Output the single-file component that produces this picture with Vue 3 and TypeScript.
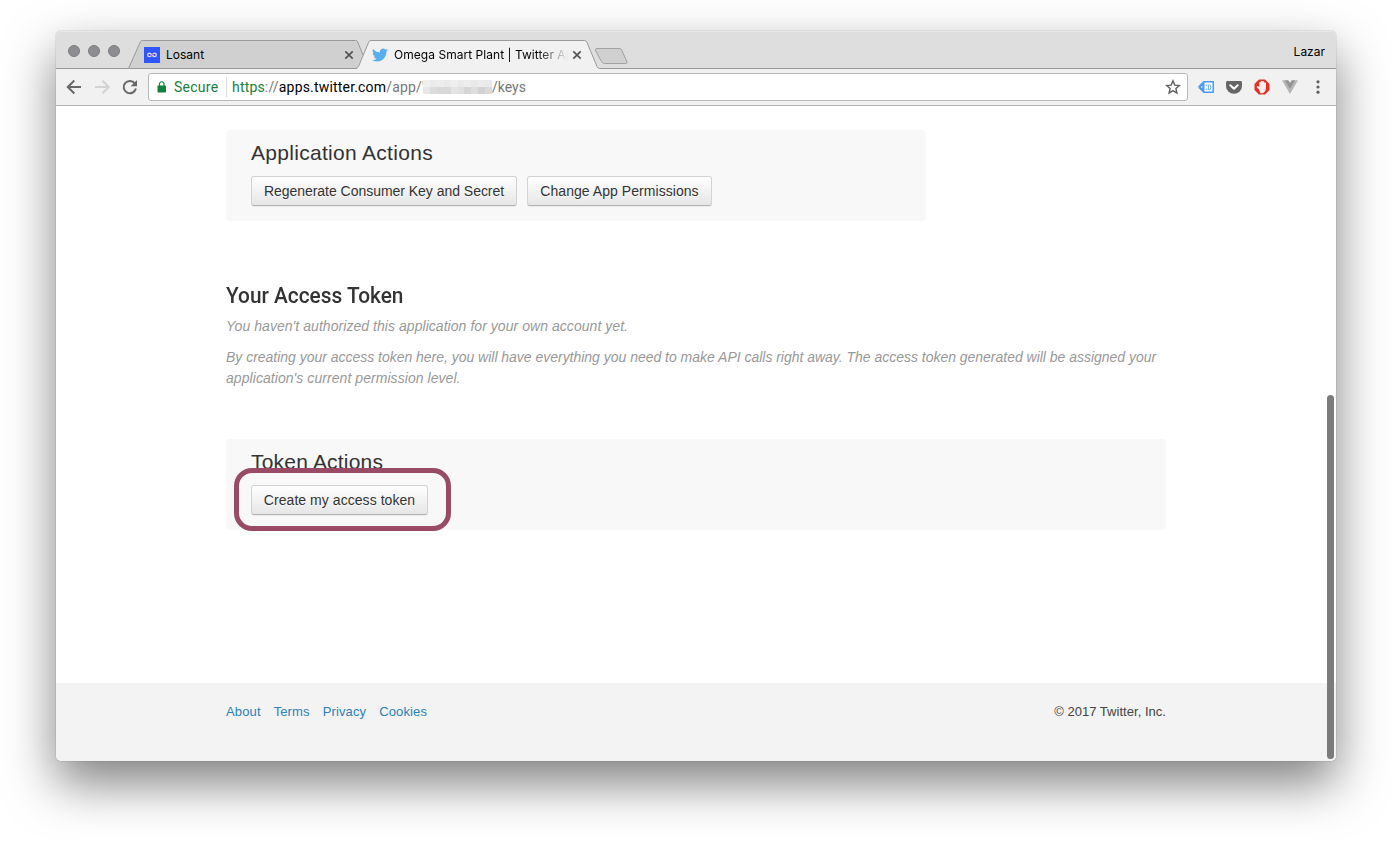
<script setup lang="ts">
interface FooterLink {
  label: string
  cls: string
}

const footerLinks: FooterLink[] = [
  { label: 'About', cls: 'about' },
  { label: 'Terms', cls: 'terms' },
  { label: 'Privacy', cls: 'privacy' },
  { label: 'Cookies', cls: 'cookies' },
]

// Grey levels of the pixelated application id in the address bar
const mosaic: string[][] = [
  ['#f0f0f0', '#ebebeb', '#ededed', '#eaeaea', '#eeeeee', '#eaeaea', '#ededed', '#e9e9e9', '#ececec', '#eaeaea'],
  ['#e8e8e8', '#dcdcdc', '#d9d9d9', '#d9d9d9', '#e4e4e4', '#e0e0e0', '#d6d6d6', '#dedede', '#d2d2d2', '#dadada'],
]
</script>

<template>
  <div class="desktop">
    <div class="window">
      <header class="tabstrip">
        <svg class="tab-shapes" width="1280" height="38" viewBox="0 0 1280 38">
          <path d="M72.5 37.5L84.5 10.5Q85 9.5 86.5 9.5H299.5Q301 9.5 301.5 10.5L307 24L301 37.5Z" fill="#d0d0d0" />
          <path d="M0 37.5H72.5L84.5 10.5Q85 9.5 86.5 9.5H299.5Q301 9.5 301.5 10.5L307 24M72.5 37.5H301" fill="none" stroke="#999" />
          <path d="M300 38C302 37 302 36 303 34.5L312.5 11.5Q313.2 9.5 315 9.5H528.5Q530.2 9.5 531 11.5L541.5 36Q542 37.5 543.5 37.5H1280V39H300Z" fill="#f1f1f1" />
          <path d="M300 37.5Q301.7 37.3 302.5 35.5L312.5 11.5Q313.2 9.5 315 9.5H528.5Q530.2 9.5 531 11.5L541 35.5Q542 37.5 543.5 37.5H1280" fill="none" stroke="#999" />
          <path d="M541 17.5H563Q565 17.5 565.7 19L571 31Q571.5 32.5 569.5 32.5H548.5Q546.5 32.5 545.5 30.5L539.5 19.5Q539 17.5 541 17.5Z" fill="#d0d0d0" stroke="#a0a0a0" />
        </svg>
        <div class="lights"><i></i><i></i><i></i></div>
        <div class="tab losant">
          <svg width="16" height="16" viewBox="0 0 16 16">
            <rect width="16" height="16" fill="#2f55ff" />
            <path d="M8 8C6.8 6.5 6.2 6.1 5.500 6.100A1.800 1.800 0 0 0 5.500 9.700C6.600 9.700 7.200 8.900 8 8C8.800 7 9.400 6.100 10.500 6.100A1.800 1.800 0 0 1 10.500 9.700C9.700 9.700 8.900 9 8 8" fill="none" stroke="#d9deff" stroke-width="1.300" />
            <path d="M6.700 9.300L9.300 6.500" stroke="#ee5b99" stroke-width="1.100" />
          </svg>
          <span class="tab-title">Losant</span>
          <svg class="close" width="10" height="10" viewBox="0 0 10 10"><path d="M1.300 1.300L8.700 8.700M8.700 1.300L1.300 8.700" stroke="#555" stroke-width="1.700" /></svg>
        </div>
        <div class="tab twitter">
          <svg width="16" height="16" viewBox="0 0 24 24">
            <path fill="#5aaef0" d="M23.950 4.570a10 10 0 0 1-2.820.770 4.960 4.960 0 0 0 2.160-2.720c-.950.550-2 .950-3.130 1.180a4.920 4.920 0 0 0-8.380 4.480C7.690 8.090 4.070 6.130 1.640 3.160a4.820 4.820 0 0 0-.670 2.480c0 1.710.870 3.210 2.190 4.100a4.900 4.900 0 0 1-2.230-.620v.060a4.920 4.920 0 0 0 3.950 4.830 5 5 0 0 1-2.210.080 4.940 4.940 0 0 0 4.600 3.420A9.870 9.870 0 0 1 0 19.540a14 14 0 0 0 7.550 2.210c9.050 0 14-7.500 14-13.980 0-.210 0-.420-.020-.630a9.940 9.940 0 0 0 2.420-2.570z" />
          </svg>
          <span class="tab-title">Omega Smart Plant | Twitter Ap</span>
          <svg class="close" width="10" height="10" viewBox="0 0 10 10"><path d="M1.300 1.300L8.700 8.700M8.700 1.300L1.300 8.700" stroke="#555" stroke-width="1.700" /></svg>
        </div>
        <span class="profile">Lazar</span>
      </header>

      <div class="toolbar">
        <svg class="nav" width="84" height="36" viewBox="0 0 84 36" fill="none">
          <path d="M18.300 11.500L11.800 18L18.300 24.500M12 18H25" stroke="#686868" stroke-width="2" />
          <path d="M46.500 11.800L52.800 18L46.500 24.200M52.500 18H39" stroke="#d2d2d2" stroke-width="2" />
          <path d="M78.800 14.300A6.200 6.200 0 1 0 79.900 19.600" stroke="#686868" stroke-width="2" />
          <path d="M81 11V17.300H74.700Z" fill="#686868" />
        </svg>
        <div class="omnibox">
          <svg class="lock" width="10" height="12" viewBox="0 0 10 12">
            <rect x=".5" y="4.500" width="8.500" height="7" rx=".8" fill="#15803d" />
            <path d="M2.500 5V3A2.250 2.250 0 0 1 7 3V5" fill="none" stroke="#15803d" stroke-width="1.200" />
          </svg>
          <span class="secure">Secure</span>
          <span class="divider"></span>
          <span class="url"><span class="scheme">https</span><span class="dim">://</span>apps.twitter.com<span class="dim">/app/'</span></span>
          <span class="mosaic">
            <span v-for="(row, r) in mosaic" :key="r" class="mosaic-row">
              <i v-for="(c, n) in row" :key="n" :style="{ background: c }"></i>
            </span>
          </span>
          <span class="url dim path">/keys</span>
          <svg class="star" width="16" height="16" viewBox="0 0 16 16">
            <path d="M8 1.800L9.800 6.100L14.300 6.500L10.900 9.500L11.900 14L8 11.600L4.100 14L5.100 9.500L1.700 6.500L6.200 6.100Z" fill="none" stroke="#606060" stroke-width="1.400" />
          </svg>
        </div>
        <svg class="extensions" width="132" height="36" viewBox="0 0 132 36">
          <path d="M16 12H5.500L.5 17V19L5.500 24H16Z" fill="#4b9bf8" />
          <rect x="6.500" y="13.500" width="8" height="9" fill="#fff" />
          <path d="M8.300 15.500V17M8.300 19.500V21M11.800 15.500Q14 18.300 11.800 21.200M10.300 15.500V21" stroke="#4b9bf8" stroke-width=".9" fill="none" />
          <circle cx="3.700" cy="18" r=".8" fill="#fff" />
          <path d="M29 12H43Q44 12 44 13.500V17A8 7.800 0 0 1 28 17V13.500Q28 12 29 12Z" fill="#666" />
          <path d="M32.300 16.200L36 19.800L39.700 16.200" fill="none" stroke="#fff" stroke-width="2" stroke-linecap="round" stroke-linejoin="round" />
          <path d="M60.900 10.500H67.100L71.500 14.900V21.100L67.100 25.500H60.900L56.500 21.100V14.900Z" fill="#e43022" />
          <path d="M61 20.500L58.700 18Q58.500 16.800 60 17L61.300 18V13.300Q62 12.300 62.800 13.300V12.300Q63.500 11.300 64.500 12.300Q65.500 11.500 66.200 12.800V13.800Q67.200 12.800 68 14V19.500Q67.800 23 65 24.300H62.500Q61.700 22.500 61 20.500Z" fill="#f9ecea" />
          <path d="M84 11.200H88L92 18L96 11.200H100L92 25Z" fill="#b5b5b5" />
          <path d="M87 11.200H90.300L92 14L93.700 11.200H97L92 19.700Z" fill="#929292" />
          <g fill="#606060"><circle cx="120" cy="12.800" r="1.600" /><circle cx="120" cy="18" r="1.600" /><circle cx="120" cy="23.200" r="1.600" /></g>
        </svg>
      </div>

      <main class="page">
        <div class="container">
          <section class="well narrow">
            <h3 class="h-app">Application Actions</h3>
            <div class="buttons">
              <button class="btn regen">Regenerate Consumer Key and Secret</button>
              <button class="btn perms">Change App Permissions</button>
            </div>
          </section>

          <h2>Your Access Token</h2>
          <p class="note first">You haven't authorized this application for your own account yet.</p>
          <p class="note second"><span class="tight">By creating your access token here, you will have everything you need to make API calls right away. The access token generated will be assigned your</span><br><span class="loose">application's current permission level.</span></p>

          <section class="well wide">
            <h3 class="h-token">Token Actions</h3>
            <div class="buttons">
              <button class="btn create">Create my access token</button>
            </div>
            <div class="highlight"></div>
          </section>
        </div>

        <footer>
          <nav>
            <a v-for="l in footerLinks" :key="l.label" :class="l.cls">{{ l.label }}</a>
          </nav>
          <span class="copy">© 2017 Twitter, Inc.</span>
        </footer>
        <div class="scrollbar"></div>
      </main>
    </div>
  </div>
</template>

<style>
body { background: #fff; overflow: hidden; }
</style>

<style scoped>
* { box-sizing: border-box; }
.desktop { width: 1392px; height: 841px; padding: 31px 56px; overflow: hidden; font-family: "Liberation Sans", Arial, sans-serif; }
.window { width: 1280px; height: 730px; border-radius: 5px; background: #fff; display: flex; flex-direction: column; box-shadow: 0 0 1px rgba(0,0,0,.6), 0 22px 50px rgba(0,0,0,.5); }
.tabstrip { position: relative; height: 38px; flex: none; display: flex; background: #dedede; border-radius: 5px 5px 0 0; box-shadow: inset 0 1px #e8e8e8; font: 12px Inter, Roboto, sans-serif; color: #000; }
.tab-shapes { position: absolute; left: 0; top: 0; }
.lights { position: relative; display: flex; gap: 8px; padding: 14px 0 0 12px; width: 88px; }
.lights i { width: 12px; height: 12px; border-radius: 50%; background: #8d8c91; border: 1px solid #7d7c81; }
.tab { position: relative; display: flex; height: 16px; margin-top: 16px; align-items: center; }
.losant { width: 210px; }
.twitter { width: 210px; margin-left: 18px; }
.tab-title { margin-left: 6px; white-space: nowrap; line-height: 16px; }
.twitter .tab-title { width: 174px; letter-spacing: .04px; -webkit-mask-image: linear-gradient(90deg, #000 82%, transparent 100%); mask-image: linear-gradient(90deg, #000 82%, transparent 100%); }
.close { margin-left: auto; flex: none; }
.profile { position: relative; margin: 13px 11px 0 auto; line-height: 16px; }
.toolbar { height: 37px; flex: none; display: flex; background: #f1f1f1; border-bottom: 1px solid #b4b4b4; }
.nav { flex: none; }
.omnibox { width: 1040px; flex: none; height: 28px; margin: 4px 0 0 8px; border: 1px solid #b8b8b8; border-radius: 3px; background: #fff; display: flex; align-items: center; font: 14px Roboto, sans-serif; white-space: nowrap; }
.lock { margin-left: 8px; flex: none; }
.secure { width: 45px; margin-left: 7px; color: #15803d; letter-spacing: .25px; }
.divider { width: 1px; height: 20px; background: #ddd; margin: 0 5px 0 7px; }
.url { color: #000; width: 191px; letter-spacing: .18px; }
.scheme { color: #15803d; }
.dim { color: #777; }
.mosaic { width: 69px; height: 14px; }
.mosaic-row { display: flex; height: 7px; }
.mosaic-row i { flex: 1; }
.url.path { width: auto; color: #777; letter-spacing: 0; }
.star { margin: 0 6px 0 auto; }
.extensions { margin-left: 10px; flex: none; }
.page { position: relative; flex: 1; display: flex; flex-direction: column; border-radius: 0 0 5px 5px; overflow: hidden; color: #333; }
.container { width: 940px; margin-left: 170px; padding-top: 24px; flex: 1; }
.well { height: 91px; background: #f8f8f8; border-radius: 4px; padding: 8px 25px 0; }
.narrow { width: 700px; }
.wide { position: relative; margin-top: 50px; }
h3 { margin: 0 0 8px; font-size: 21px; font-weight: 400; line-height: 30px; letter-spacing: .3px; }
.h-token { letter-spacing: .2px; }
.buttons { display: flex; gap: 10px; }
.btn { height: 30px; padding: 0; border: 1px solid #d3d3d3; border-bottom-color: #b3b3b3; border-radius: 3px; background: linear-gradient(#fff, #e6e6e6); color: #333; font: 14px/20px "Liberation Sans", Arial, sans-serif; text-shadow: 0 1px 1px rgba(255,255,255,.75); box-shadow: 0 1px 1px rgba(0,0,0,.06); white-space: nowrap; }
.regen { width: 266px; letter-spacing: -.03px; }
.perms { width: 185px; letter-spacing: .05px; }
.create { width: 177px; letter-spacing: .05px; }
h2 { margin: 59px 0 0; font: 500 22.5px/30px Roboto, sans-serif; color: #333; transform: scaleX(.926); transform-origin: 0 50%; }
.note { margin: 0; font-size: 14px; font-style: italic; line-height: 21px; color: #999; white-space: nowrap; }
.first { margin-top: 6px; letter-spacing: .05px; }
.second { margin-top: 10px; }
.tight { letter-spacing: -.02px; }
.loose { letter-spacing: .06px; }
.highlight { position: absolute; left: 8px; top: 29px; width: 217px; height: 63px; border: 5px solid #994a64; border-radius: 18px; }
footer { height: 78px; background: #f3f3f3; padding: 19px 170px 0; display: flex; justify-content: space-between; font-size: 13px; line-height: 20px; color: #444; }
footer nav { display: flex; gap: 13px; color: #2b82bd; letter-spacing: .13px; }
.copy { letter-spacing: .03px; }
.scrollbar { position: absolute; left: 1271px; top: 289px; width: 7px; height: 364px; border-radius: 4px; background: #7b7b7b; }
</style>
